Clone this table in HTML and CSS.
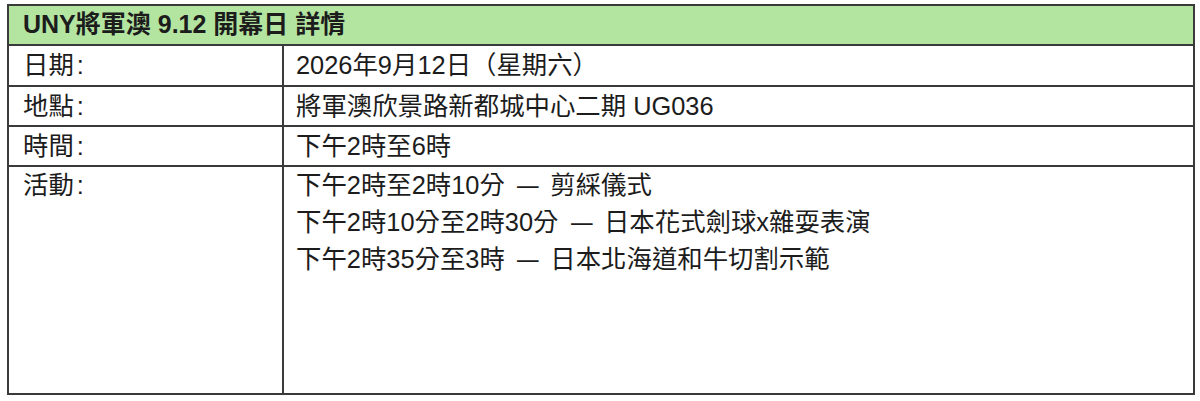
FILE: index.html
```html
<!DOCTYPE html>
<html lang="zh-Hant">
<head>
<meta charset="utf-8">
<title>UNY將軍澳 9.12 開幕日 詳情</title>
<link rel="stylesheet" href="styles.css">
</head>
<body>
<div class="sheet">
  <div class="cell head">UNY將軍澳 9.12 開幕日 詳情</div>
  <div class="cell label">日期<span class="colon">:</span></div>
  <div class="cell value">2026年9月12日（星期六）</div>
  <div class="cell label">地點<span class="colon">:</span></div>
  <div class="cell value">將軍澳欣景路新都城中心二期 UG036</div>
  <div class="cell label">時間<span class="colon">:</span></div>
  <div class="cell value">下午2時至6時</div>
  <div class="cell label top-label">活動<span class="colon">:</span></div>
  <div class="cell value top-list">
    <div class="line">下午2時至2時10分 <span class="dash">—</span> 剪綵儀式</div>
    <div class="line">下午2時10分至2時30分 <span class="dash">—</span> 日本花式劍球x雜耍表演</div>
    <div class="line">下午2時35分至3時 <span class="dash">—</span> 日本北海道和牛切割示範</div>
  </div>
</div>
</body>
</html>
```

FILE: styles.css
```css
html, body {
  margin: 0;
  padding: 0;
  background: #ffffff;
}

body {
  padding: 4px 0 0 7px;
  font-family: "Liberation Sans", "Noto Sans CJK TC", sans-serif;
  font-size: 25.4px;
  color: #1c1c1c;
}

.sheet {
  display: grid;
  grid-template-columns: 275px 911px;
  grid-template-rows: 40px 41px 40px 40px 228px;
  width: max-content;
  border-top: 2px solid #3a3a3a;
  border-left: 2px solid #3a3a3a;
}

.cell {
  box-sizing: border-box;
  border-right: 2px solid #3a3a3a;
  border-bottom: 2px solid #3a3a3a;
  display: flex;
  align-items: center;
  line-height: 37px;
  white-space: nowrap;
}

.head {
  grid-column: 1 / span 2;
  background: #b3e5a1;
  font-weight: bold;
  font-size: 25px;
  padding-left: 14px;
  padding-bottom: 1px;
}

.label {
  padding-left: 14px;
}

.colon {
  margin-left: 3px;
}

.value {
  padding-left: 12px;
}

.dash {
  display: inline-block;
  margin: 0 3px;
  transform: scaleX(0.85);
}

.top-label {
  align-items: flex-start;
}

.top-list {
  flex-direction: column;
  align-items: flex-start;
  justify-content: flex-start;
}
```
